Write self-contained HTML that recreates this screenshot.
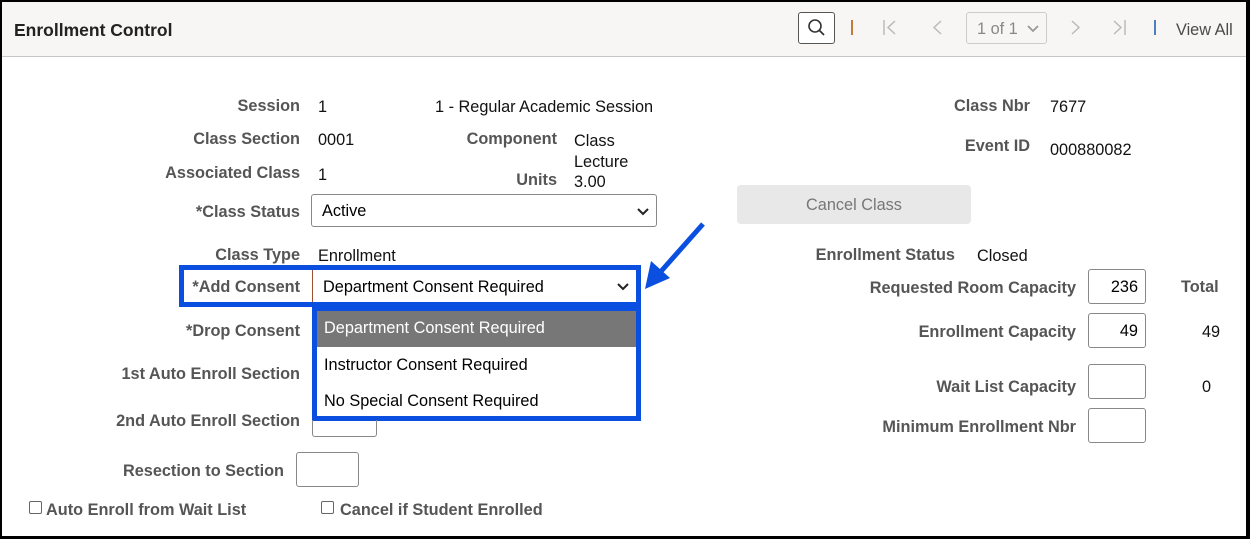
<!DOCTYPE html>
<html><head><style>
body{margin:0;width:1250px;height:539px;background:#000;position:relative;overflow:hidden;font-family:"Liberation Sans",Arial,sans-serif;font-size:16.3px;color:#000}
#pg{position:absolute;left:2px;top:2px;width:1244px;height:534px;background:#fff}
#hd{position:absolute;left:0;top:0;width:1244px;height:54px;background:#f7f6f4;border-bottom:1px solid #c8c6c2}
.a{position:absolute;white-space:nowrap}
.l{position:absolute;white-space:nowrap;font-weight:bold;color:#555;text-align:right;margin-top:1px}
.v{position:absolute;white-space:nowrap;color:#111;margin-top:1px}
.in{position:absolute;border:1px solid #888;border-radius:3px;background:#fff;box-sizing:border-box;text-align:right;padding-right:7px;line-height:34px}
.cb{position:absolute;width:11px;height:11px;border:1px solid #666;border-radius:2px;background:#fff}
</style></head><body>
<div id="pg">
<div id="hd">
 <div class="a" style="left:12px;top:18px;font-weight:bold;font-size:17.5px;color:#222">Enrollment Control</div>
 <div class="a" style="left:796px;top:10px;width:37px;height:32px;border:1px solid #555;border-radius:3px;background:#fff;box-sizing:border-box">
  <svg width="37" height="32" viewBox="0 0 37 32" style="position:absolute;left:-1px;top:-1px"><circle cx="17" cy="14" r="6" fill="none" stroke="#333" stroke-width="1.6"/><line x1="21.5" y1="18.5" x2="26" y2="23" stroke="#333" stroke-width="1.8"/></svg>
 </div>
 <div class="a" style="left:849px;top:18px;width:2px;height:15px;background:#c27c3a"></div>
 <svg class="a" style="left:880px;top:17px" width="16" height="18"><line x1="2" y1="1" x2="2" y2="16" stroke="#bbb" stroke-width="1.5"/><polyline points="13,2 6,8.5 13,15" fill="none" stroke="#bbb" stroke-width="1.5"/></svg>
 <svg class="a" style="left:928px;top:17px" width="16" height="18"><polyline points="11,2 4,8.5 11,15" fill="none" stroke="#bbb" stroke-width="1.5"/></svg>
 <div class="a" style="left:964px;top:10px;width:81px;height:32px;border:1px solid #ccc;border-radius:3px;box-sizing:border-box;color:#888;line-height:32px;padding-left:10px">1 of 1
  <svg style="position:absolute;left:60px;top:11px" width="12" height="9"><polyline points="1,2 6,7 11,2" fill="none" stroke="#999" stroke-width="1.8"/></svg></div>
 <svg class="a" style="left:1066px;top:17px" width="16" height="18"><polyline points="4,2 11,8.5 4,15" fill="none" stroke="#bbb" stroke-width="1.5"/></svg>
 <svg class="a" style="left:1110px;top:17px" width="16" height="18"><polyline points="2,2 9,8.5 2,15" fill="none" stroke="#bbb" stroke-width="1.5"/><line x1="13" y1="1" x2="13" y2="16" stroke="#bbb" stroke-width="1.5"/></svg>
 <div class="a" style="left:1152px;top:18px;width:2px;height:15px;background:#4a7fc0"></div>
 <div class="a" style="left:1174px;top:19px;color:#4a4a4a">View All</div>
</div>

<div class="l" style="right:946px;top:94px">Session</div>
<div class="v" style="left:316px;top:95px">1</div>
<div class="v" style="left:433px;top:95px">1 - Regular Academic Session</div>
<div class="l" style="right:946px;top:127px">Class Section</div>
<div class="v" style="left:316px;top:128px">0001</div>
<div class="l" style="right:689px;top:127px">Component</div>
<div class="v" style="left:572px;top:128px;line-height:21px">Class<br>Lecture</div>
<div class="l" style="right:946px;top:161px">Associated Class</div>
<div class="v" style="left:316px;top:163px">1</div>
<div class="l" style="right:689px;top:168px">Units</div>
<div class="v" style="left:572px;top:170px">3.00</div>
<div class="l" style="right:946px;top:200px">*Class Status</div>
<div class="a" style="left:309px;top:192px;width:346px;height:33px;border:1px solid #888;border-radius:3px;box-sizing:border-box;line-height:33px;padding-left:10px">Active
 <svg style="position:absolute;right:7px;top:12px" width="12" height="9"><polyline points="1,2 6,7 11,2" fill="none" stroke="#222" stroke-width="2"/></svg></div>
<div class="l" style="right:946px;top:243px">Class Type</div>
<div class="v" style="left:316px;top:244px">Enrollment</div>

<div class="a" style="left:177px;top:263px;width:462px;height:42px;border:5px solid #0a4fe0;box-sizing:border-box"></div>
<div class="l" style="right:946px;top:275px">*Add Consent</div>
<div class="a" style="left:310px;top:268px;width:324px;height:32px;border-left:1px solid #a05030;background:#fff;line-height:34px;padding-left:10px;box-sizing:border-box">Department Consent Required
 <svg style="position:absolute;right:7px;top:12px" width="12" height="9"><polyline points="1,2 6,7 11,2" fill="none" stroke="#222" stroke-width="2"/></svg></div>
<div class="a" style="left:310px;top:304px;width:329px;height:115px;border:5px solid #0a4fe0;box-sizing:border-box;background:#fff">
 <div style="height:36px;background:#777;color:#fff;line-height:35px;padding-left:7px">Department Consent Required</div>
 <div style="height:36px;line-height:36px;padding-left:7px">Instructor Consent Required</div>
 <div style="height:36px;line-height:36px;padding-left:7px">No Special Consent Required</div>
</div>
<svg class="a" style="left:636px;top:215px" width="75" height="80"><line x1="65" y1="7" x2="18" y2="60" stroke="#0a4fe0" stroke-width="5"/><polygon points="7,72 13,44 32,61" fill="#0a4fe0"/></svg>

<div class="l" style="right:946px;top:319px">*Drop Consent</div>
<div class="l" style="right:946px;top:362px">1st Auto Enroll Section</div>
<div class="l" style="right:946px;top:409px">2nd Auto Enroll Section</div>
<div class="a" style="left:310px;top:418px;width:63px;height:16px;border:1px solid #888;border-top:none;border-radius:0 0 3px 3px"></div>
<div class="l" style="right:962px;top:459px">Resection to Section</div>
<div class="in" style="left:294px;top:450px;width:63px;height:35px"></div>
<div class="cb" style="left:27px;top:499px"></div>
<div class="l" style="left:44px;top:498px;text-align:left">Auto Enroll from Wait List</div>
<div class="cb" style="left:319px;top:499px"></div>
<div class="l" style="left:338px;top:498px;text-align:left">Cancel if Student Enrolled</div>

<div class="l" style="right:216px;top:94px">Class Nbr</div>
<div class="v" style="left:1048px;top:95px">7677</div>
<div class="l" style="right:216px;top:134px">Event ID</div>
<div class="v" style="left:1048px;top:138px">000880082</div>
<div class="a" style="left:735px;top:183px;width:234px;height:39px;background:#e8e8e8;border-radius:4px;color:#777;text-align:center;line-height:41px">Cancel Class</div>
<div class="l" style="right:291px;top:243px">Enrollment Status</div>
<div class="v" style="left:975px;top:244px">Closed</div>
<div class="l" style="right:170px;top:276px">Requested Room Capacity</div>
<div class="in" style="left:1086px;top:267px;width:58px;height:35px">236</div>
<div class="l" style="left:1179px;top:275px;text-align:left">Total</div>
<div class="l" style="right:170px;top:320px">Enrollment Capacity</div>
<div class="in" style="left:1086px;top:311px;width:58px;height:35px">49</div>
<div class="v" style="left:1200px;top:320px">49</div>
<div class="l" style="right:170px;top:375px">Wait List Capacity</div>
<div class="in" style="left:1086px;top:362px;width:58px;height:35px"></div>
<div class="v" style="left:1200px;top:375px">0</div>
<div class="l" style="right:170px;top:415px">Minimum Enrollment Nbr</div>
<div class="in" style="left:1086px;top:406px;width:58px;height:35px"></div>
</div>
</body></html>
